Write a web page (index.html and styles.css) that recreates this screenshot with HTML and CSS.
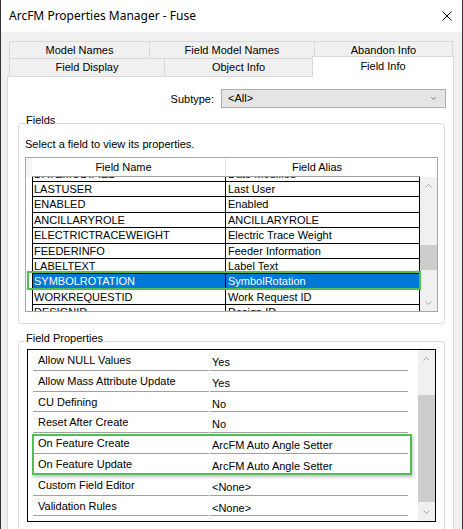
FILE: index.html
```html
<!DOCTYPE html>
<html lang="en">
<head>
<meta charset="utf-8">
<title>ArcFM Properties Manager - Fuse</title>
<link rel="stylesheet" href="styles.css">
</head>
<body>
<div class="window">
  <header class="titlebar">
    <span class="title">ArcFM Properties Manager - Fuse</span>
    <svg class="close" width="10" height="10" viewBox="0 0 10 10"><path d="M0.5 0.5L9.5 9.5M9.5 0.5L0.5 9.5" stroke="#000" stroke-width="1" fill="none"/></svg>
  </header>
  <div class="client">
    <div class="tabs">
      <div class="tabrow row1">
        <div class="tab w-model">Model Names</div>
        <div class="tab w-fmn">Field Model Names</div>
        <div class="tab w-aband">Abandon Info</div>
      </div>
      <div class="tabrow row2">
        <div class="tab w-fdisp">Field Display</div>
        <div class="tab w-obj">Object Info</div>
        <div class="tab w-finfo active">Field Info</div>
      </div>
    </div>
    <div class="panel">
      <div class="subtype">
        <span class="label">Subtype:</span>
        <div class="combo">
          <span>&lt;All&gt;</span>
          <svg width="5" height="3" viewBox="0 0 5 3"><path d="M0.3 0.3L2.5 2.5L4.7 0.3" stroke="#707070" stroke-width="1" fill="none"/></svg>
        </div>
      </div>

      <fieldset class="group fields">
        <legend>Fields</legend>
        <p class="hint">Select a field to view its properties.</p>
        <div class="grid">
          <div class="ghead">
            <div class="gstub"></div>
            <div class="hc hc1">Field Name</div>
            <div class="hc hc2">Field Alias</div>
          </div>
          <div class="gbody">
            <div class="gview">
              <div class="rows">
                <div class="row"><div class="cell c1">DATEMODIFIED</div><div class="cell c2">Date Modified</div></div>
                <div class="row"><div class="cell c1">LASTUSER</div><div class="cell c2">Last User</div></div>
                <div class="row"><div class="cell c1">ENABLED</div><div class="cell c2">Enabled</div></div>
                <div class="row"><div class="cell c1">ANCILLARYROLE</div><div class="cell c2">ANCILLARYROLE</div></div>
                <div class="row"><div class="cell c1">ELECTRICTRACEWEIGHT</div><div class="cell c2">Electric Trace Weight</div></div>
                <div class="row"><div class="cell c1">FEEDERINFO</div><div class="cell c2">Feeder Information</div></div>
                <div class="row"><div class="cell c1">LABELTEXT</div><div class="cell c2">Label Text</div></div>
                <div class="row sel"><div class="cell c1">SYMBOLROTATION</div><div class="cell c2">SymbolRotation</div></div>
                <div class="row"><div class="cell c1">WORKREQUESTID</div><div class="cell c2">Work Request ID</div></div>
                <div class="row"><div class="cell c1">DESIGNID</div><div class="cell c2">Design ID</div></div>
              </div>
            </div>
            <div class="vscroll s1">
              <div class="sbtn"><svg width="7" height="4" viewBox="0 0 7 4"><path d="M0.5 3.5L3.5 0.5L6.5 3.5" stroke="#a6a6a6" stroke-width="1" fill="none"/></svg></div>
              <div class="track"><div class="thumb"></div></div>
              <div class="sbtn"><svg width="7" height="4" viewBox="0 0 7 4"><path d="M0.5 0.5L3.5 3.5L6.5 0.5" stroke="#a6a6a6" stroke-width="1" fill="none"/></svg></div>
            </div>
          </div>
          <div class="hl hl-row"></div>
        </div>
      </fieldset>

      <fieldset class="group props">
        <legend>Field Properties</legend>
        <div class="plist">
          <div class="prows">
            <div class="prow"><div class="pname">Allow NULL Values</div><div class="pval">Yes</div></div>
            <div class="prow"><div class="pname">Allow Mass Attribute Update</div><div class="pval">Yes</div></div>
            <div class="prow"><div class="pname">CU Defining</div><div class="pval">No</div></div>
            <div class="prow"><div class="pname">Reset After Create</div><div class="pval">No</div></div>
            <div class="prow"><div class="pname">On Feature Create</div><div class="pval">ArcFM Auto Angle Setter</div></div>
            <div class="prow"><div class="pname">On Feature Update</div><div class="pval">ArcFM Auto Angle Setter</div></div>
            <div class="prow"><div class="pname">Custom Field Editor</div><div class="pval">&lt;None&gt;</div></div>
            <div class="prow"><div class="pname">Validation Rules</div><div class="pval">&lt;None&gt;</div></div>
          </div>
          <div class="vscroll s2">
            <div class="sbtn"><svg width="7" height="4" viewBox="0 0 7 4"><path d="M0.5 3.5L3.5 0.5L6.5 3.5" stroke="#a6a6a6" stroke-width="1" fill="none"/></svg></div>
            <div class="track"><div class="thumb"></div></div>
            <div class="sbtn"><svg width="7" height="4" viewBox="0 0 7 4"><path d="M0.5 0.5L3.5 3.5L6.5 0.5" stroke="#a6a6a6" stroke-width="1" fill="none"/></svg></div>
          </div>
          <div class="hl hl-props"></div>
        </div>
      </fieldset>
    </div>
  </div>
</div>
</body>
</html>
```

FILE: styles.css
```css
* { box-sizing: border-box; }
html, body { margin: 0; padding: 0; }
body {
  width: 463px;
  height: 529px;
  overflow: hidden;
  background: #f0f0f0;
  font-family: "Liberation Sans", Arial, sans-serif;
  font-size: 11px;
  color: #000;
}
.window {
  height: 529px;
  border-left: 1px solid #333;
  border-right: 1px solid #333;
  background: #f0f0f0;
  overflow: hidden;
}
.titlebar {
  height: 32px;
  background: #fff;
  display: flex;
  align-items: center;
  justify-content: space-between;
  padding: 0 10px 0 8px;
}
.title {
  font-family: "Noto Sans", "Open Sans", sans-serif;
  font-size: 12px;
  line-height: 16px;
}
.close { display: block; }

.client { padding: 9px 0 0 6px; }
.tabs { margin-left: 2px; }
.tabrow { display: flex; align-items: flex-end; }
.tab {
  border: 1px solid #d9d9d9;
  border-bottom: 0;
  background: #f0f0f0;
  text-align: center;
  margin-left: -1px;
  white-space: nowrap;
}
.tab:first-child { margin-left: 0; }
.row1 .tab { height: 17px; line-height: 16px; }
.row2 .tab { height: 18px; line-height: 17px; }
.row2 .tab.active {
  height: 21px;
  line-height: 18px;
  margin: -2px 0 -1px -1px;
  background: #fff;
  position: relative;
  z-index: 1;
}
.w-model { width: 141px; }
.w-fmn { width: 166px; }
.w-aband { width: 139px; }
.w-fdisp { width: 156px; }
.w-obj { width: 149px; }
.w-finfo { width: 142px; }

.panel {
  width: 447px;
  height: 480px;
  background: #fff;
  border: 1px solid #d9d9d9;
}
.subtype {
  display: flex;
  justify-content: flex-end;
  align-items: center;
  gap: 7px;
  padding: 12px 7px 0 0;
}
.combo {
  width: 225px;
  height: 19px;
  border: 1px solid #adadad;
  background: #e5e5e5;
  display: flex;
  align-items: center;
  justify-content: space-between;
  padding: 0 9px 0 6px;
  line-height: 17px;
}
.combo svg { display: block; }

.group {
  border: 1px solid #dcdcdc;
  border-radius: 3px;
  margin: 0 0 0 10px;
  width: 427px;
  min-width: 0;
}
.group legend {
  padding: 0 1px 6px;
  line-height: 13px;
  font-size: 11px;
}
.fields { margin-top: 6px; padding: 0 6px 11px; }
.props { margin-top: 8px; padding: 0 8px 20px; }
.props legend { margin-left: -2px; }

.hint { margin: 5px 0 6px; line-height: 13px; }

.grid {
  position: relative;
  height: 155px;
  border: 1px solid #a3a8b1;
  background: #fff;
}
.ghead { display: flex; height: 19px; }
.gstub { width: 6px; background: #f4f4f4; }
.hc {
  width: 194px;
  line-height: 18px;
  text-align: center;
  border-bottom: 1px solid #a0a0a0;
}
.hc1 { border-right: 1px solid #e5e5e5; padding-right: 10px; }
.hc2 { padding-right: 12px; }
.gbody { display: flex; height: 134px; }
.gview { width: 394px; overflow: hidden; padding-left: 6px; }
.rows { margin-top: -10.4px; }
.row { display: flex; height: 15.4px; border-bottom: 1px solid #000; }
.cell {
  width: 194px;
  line-height: 14.4px;
  white-space: nowrap;
  overflow: hidden;
  border-right: 1px solid #000;
}
.c1 { border-left: 1px solid #000; padding-left: 1px; }
.c2 { padding-left: 2px; }
.row.sel .cell { background: #0078d7; color: #fff; }

.vscroll {
  width: 17px;
  flex: none;
  background: #f0f0f0;
  display: flex;
  flex-direction: column;
}
.sbtn {
  height: 17px;
  flex: none;
  display: flex;
  align-items: center;
  justify-content: center;
}
.sbtn svg { display: block; }
.track { flex: 1; }
.thumb { background: #cdcdcd; }
.s1 .thumb { margin-top: 51px; height: 25px; }
.s2 .sbtn { height: 18px; }
.s2 .thumb { margin-top: 27px; height: 107px; }

.plist {
  position: relative;
  display: flex;
  height: 173px;
  margin-top: -2px;
  border: 1px solid #000;
  background: #fff;
}
.prows { flex: 1; padding-left: 5px; }
.prow { display: flex; height: 20.8px; }
.pname {
  width: 176px;
  border-bottom: 1px solid #a0a0a0;
  padding: 4px 0 0 5px;
  line-height: 13px;
  white-space: nowrap;
}
.pval {
  width: 198px;
  margin-left: 1px;
  border-bottom: 1px solid #a0a0a0;
  padding: 6px 0 0 2px;
  line-height: 13px;
  white-space: nowrap;
}

.hl {
  position: absolute;
  border: 2px solid #4fbf55;
  pointer-events: none;
}
.hl-row {
  top: 113px;
  left: 1px;
  width: 394px;
  height: 19px;
  box-shadow: 0 0 2px rgba(0, 0, 0, 0.15);
}
.hl-props {
  top: 84px;
  left: 4px;
  width: 380px;
  height: 41px;
  box-shadow: 1px 2px 3px rgba(0, 0, 0, 0.25);
}
```
